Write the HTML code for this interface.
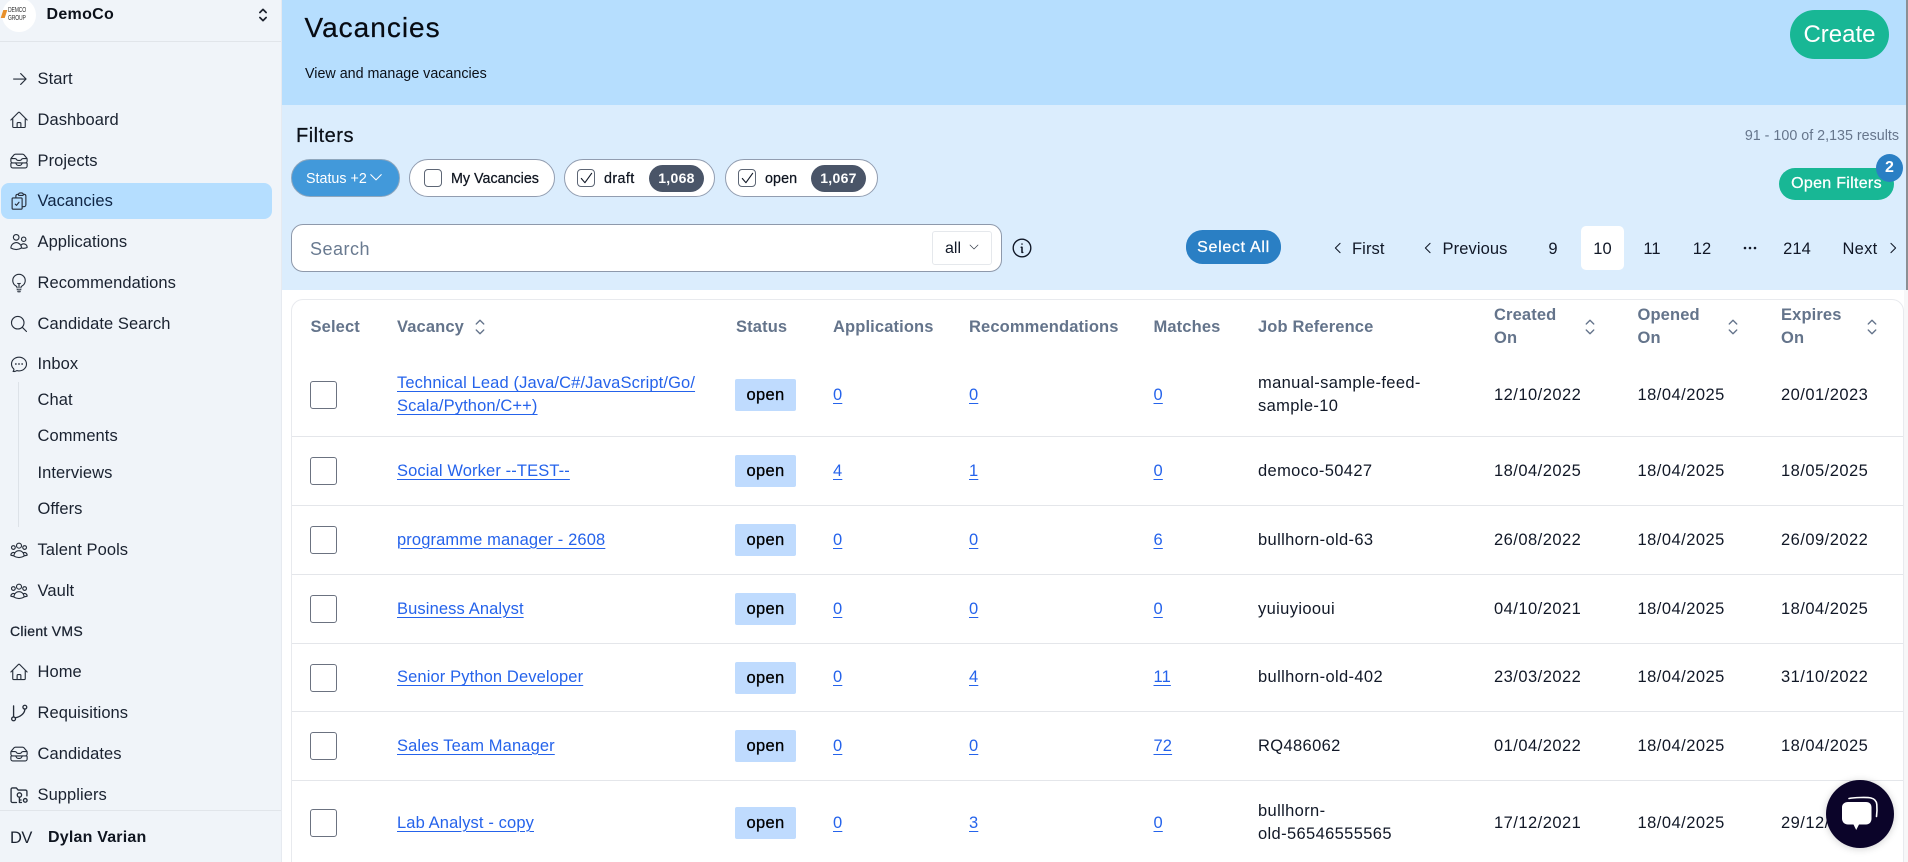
<!DOCTYPE html>
<html lang="en">
<head>
<meta charset="utf-8">
<title>Vacancies</title>
<style>
*{box-sizing:border-box}
html,body{margin:0;padding:0;width:1908px;height:862px;overflow:hidden;background:#fff}
body{font-family:"Liberation Sans",sans-serif;color:#111827;position:relative;font-size:16px}
a{color:inherit;text-decoration:none}
svg{display:block}
.ic{fill:none;stroke:currentColor;stroke-width:1.35;stroke-linecap:round;stroke-linejoin:round}
.abs{position:absolute;white-space:nowrap}
.med{-webkit-text-stroke:.25px currentColor}

aside{position:absolute;left:0;top:0;width:282px;height:862px;background:#f0f4f9;border-right:1px solid #e6eaf0}
.logo{position:absolute;left:2px;top:-2px;width:34px;height:34px;border-radius:50%;background:#fff}
.hr{position:absolute;left:0;width:281px;height:1px;background:#e1e5ea}
.active{position:absolute;left:1px;top:183px;width:271px;height:36px;border-radius:8px;background:#b5deff}
.n{position:absolute;left:0;width:272px;height:24px;line-height:24px;padding-left:37.5px;font-size:16.5px;letter-spacing:.06px;color:#1a2230;white-space:nowrap}
.n svg{position:absolute;left:9px;top:2px;width:20px;height:20px;color:#252d3a}
.n.v{color:#0f2544}
.vl{position:absolute;left:18px;top:382px;width:1px;height:145px;background:#dde2e8}

.head{position:absolute;left:282px;top:0;width:1624px;height:105px;background:#b6defe}
.filters{position:absolute;left:282px;top:105px;width:1624px;height:185px;background:#dbedfd}
.edge{position:absolute;left:1906px;top:0;width:2px;height:290px;background:#8b8f94}
.edge2{position:absolute;left:1904px;top:290px;width:4px;height:572px;background:#f7f7f8}

.pill{position:absolute;top:159px;height:38px;border:1px solid #929db0;border-radius:19px;background:#fff}
.cb{position:absolute;top:169px;width:18px;height:18px;border:1px solid #5d6675;border-radius:4px;background:#fff}
.cb svg{position:absolute;left:1px;top:0;width:15px;height:16px}
.badge{position:absolute;top:165px;height:27px;border-radius:14px;background:#4a5568;color:#fff;font-weight:700;font-size:14px;line-height:27px;text-align:center;letter-spacing:.3px}
.t14{font-size:14.3px;line-height:20px}

.search{position:absolute;left:291px;top:224px;width:711px;height:48px;border:1px solid #8e99ab;border-radius:12px;background:#fff}
.allbox{position:absolute;left:932px;top:231px;width:60px;height:34px;border:1px solid #e5e8ec;border-radius:3px;background:#fff}
.btn{position:absolute;color:#fff;text-align:center;white-space:nowrap}
.pg{position:absolute;top:239px;line-height:20px;color:#111827;white-space:nowrap;letter-spacing:.1px;font-size:16.5px}
.pgc{width:40px;text-align:center}
.cur{position:absolute;left:1581px;top:226px;width:43px;height:44px;background:#fff;border-radius:5px}

.card{position:absolute;left:291px;top:299px;width:1613px;height:580px;border:1px solid #e8eaee;border-radius:12px}
table{position:absolute;left:292px;top:299px;width:1611px;border-collapse:separate;border-spacing:0;table-layout:fixed;font-size:16.5px}
th{height:55px;text-align:left;font-weight:700;color:#64748b;letter-spacing:.13px;line-height:23px;padding:1px 0 0;vertical-align:middle;position:relative}
th.two{padding-top:0}
th svg{position:absolute;top:16px;width:24px;height:24px;color:#64748b;stroke-width:1.15}
td{padding:0;vertical-align:middle;line-height:23px;border-bottom:1px solid #e4e6ea;letter-spacing:.12px;color:#111827}
tr.last td{border-bottom:0}
td a{color:#2563eb;text-decoration:underline;text-underline-offset:3px;text-decoration-thickness:1px}
th:first-child{padding-left:18.5px}
td:first-child{padding-left:17.5px}
.box{display:block;width:27px;height:28px;border:1px solid #6b7280;border-radius:3px;background:#fff}
.tag{display:block;width:61px;height:32px;background:#bfdbfe;border-radius:2px;text-align:center;line-height:32px;letter-spacing:.3px;color:#000;-webkit-text-stroke:.3px #000}
.d{letter-spacing:.47px}
.j{letter-spacing:.36px}

.chat{position:absolute;left:1826px;top:780px;width:68px;height:68px;border-radius:50%;background:#0b0429;box-shadow:0 1px 8px rgba(0,0,0,.18)}
</style>
</head>
<body>

<aside>
  <div class="logo">
    <div class="abs" style="left:6px;top:9px;font-size:7px;line-height:8px;color:#333;letter-spacing:-.2px;transform:scaleX(.72);transform-origin:left">DEMCO<br>GROUP</div>
    <div class="abs" style="left:0;top:12px;width:4px;height:8px;background:#e8912d;transform:skewX(-18deg)"></div>
  </div>
  <div class="abs" style="left:46.5px;top:4px;font-weight:700;line-height:21px;letter-spacing:.3px;color:#0c111a">DemoCo</div>
  <svg class="ic abs" style="left:253px;top:5px;width:20px;height:20px;stroke-width:2;color:#1a202c" viewBox="0 0 24 24"><path d="M8.25 15 12 18.75 15.75 15m-7.5-6L12 5.25 15.75 9"/></svg>
  <div class="hr" style="top:41px"></div>

  <div class="active"></div>
  <a class="n" style="top:67px"><svg class="ic" viewBox="0 0 24 24"><path d="M14 5.500 20.500 12 14 18.500M20.500 12H5.500"/></svg>Start</a>
  <a class="n" style="top:108px"><svg class="ic" viewBox="0 0 24 24"><path d="m2.25 12 8.954-8.955c.44-.439 1.152-.439 1.591 0L21.75 12M4.5 9.75v10.125c0 .621.504 1.125 1.125 1.125H9.75v-4.875c0-.621.504-1.125 1.125-1.125h2.25c.621 0 1.125.504 1.125 1.125V21h4.125c.621 0 1.125-.504 1.125-1.125V9.75M8.25 21h8.25"/></svg>Dashboard</a>
  <a class="n" style="top:149px"><svg class="ic" viewBox="0 0 24 24"><path d="m7.875 14.25 1.214 1.942a2.25 2.25 0 0 0 1.908 1.058h2.006c.776 0 1.497-.4 1.908-1.058l1.214-1.942M2.41 9h4.636a2.25 2.25 0 0 1 1.872 1.002l.164.246a2.25 2.25 0 0 0 1.872 1.002h2.092a2.25 2.25 0 0 0 1.872-1.002l.164-.246A2.25 2.25 0 0 1 16.954 9h4.636M2.41 9a2.25 2.25 0 0 0-.16.832V12a2.25 2.25 0 0 0 2.25 2.25h15A2.25 2.25 0 0 0 21.75 12V9.832c0-.287-.055-.57-.16-.832M2.41 9a2.25 2.25 0 0 1 .382-.632l3.285-3.832a2.25 2.25 0 0 1 1.708-.786h8.43c.657 0 1.281.287 1.709.786l3.284 3.832c.163.19.291.404.382.632M4.5 20.25h15A2.25 2.25 0 0 0 21.75 18v-2.625c0-.621-.504-1.125-1.125-1.125H3.375c-.621 0-1.125.504-1.125 1.125V18a2.25 2.25 0 0 0 2.25 2.25Z"/></svg>Projects</a>
  <a class="n v" style="top:189px"><svg class="ic" viewBox="0 0 24 24"><path d="M11.35 3.836c-.065.21-.1.433-.1.664 0 .414.336.75.75.75h4.5a.75.75 0 0 0 .75-.75 2.25 2.25 0 0 0-.1-.664m-5.8 0A2.251 2.251 0 0 1 13.5 2.25H15c1.012 0 1.867.668 2.15 1.586m-5.8 0c-.376.023-.75.05-1.124.08C9.095 4.01 8.25 4.973 8.25 6.108V8.25m8.9-4.414c.376.023.75.05 1.124.08 1.131.094 1.976 1.057 1.976 2.192V16.5A2.25 2.25 0 0 1 18 18.75h-2.25m-7.5-10.5H4.875c-.621 0-1.125.504-1.125 1.125v11.25c0 .621.504 1.125 1.125 1.125h9.75c.621 0 1.125-.504 1.125-1.125V18.75m-7.5-10.5h6.375c.621 0 1.125.504 1.125 1.125v9.375m-8.25-3 1.5 1.5 3-3.75"/></svg>Vacancies</a>
  <a class="n" style="top:230px"><svg class="ic" viewBox="0 0 24 24"><path d="M15 19.128a9.38 9.38 0 0 0 2.625.372 9.337 9.337 0 0 0 4.121-.952 4.125 4.125 0 0 0-7.533-2.493M15 19.128v-.003c0-1.113-.285-2.16-.786-3.07M15 19.128v.106A12.318 12.318 0 0 1 8.624 21c-2.331 0-4.512-.645-6.374-1.766l-.001-.109a6.375 6.375 0 0 1 11.964-3.07M12 6.375a3.375 3.375 0 1 1-6.75 0 3.375 3.375 0 0 1 6.75 0Zm8.25 2.25a2.625 2.625 0 1 1-5.25 0 2.625 2.625 0 0 1 5.25 0Z"/></svg>Applications</a>
  <a class="n" style="top:271px"><svg class="ic" viewBox="0 0 24 24"><path d="M12 18v-5.25m0 0a6.01 6.01 0 0 0 1.5-.189m-1.5.189a6.01 6.01 0 0 1-1.5-.189m3.75 7.478a12.06 12.06 0 0 1-4.5 0m3.75 2.383a14.406 14.406 0 0 1-3 0M14.25 18v-.192c0-.983.658-1.823 1.508-2.316a7.5 7.5 0 1 0-7.517 0c.85.493 1.509 1.333 1.509 2.316V18"/></svg>Recommendations</a>
  <a class="n" style="top:312px"><svg class="ic" viewBox="0 0 24 24"><path d="m21 21-5.197-5.197m0 0A7.5 7.5 0 1 0 5.196 5.196a7.5 7.5 0 0 0 10.607 10.607Z"/></svg>Candidate Search</a>
  <a class="n" style="top:352px"><svg class="ic" viewBox="0 0 24 24"><path d="M8.625 12a.375.375 0 1 1-.75 0 .375.375 0 0 1 .75 0Zm0 0H8.25m4.125 0a.375.375 0 1 1-.75 0 .375.375 0 0 1 .75 0Zm0 0H12m4.125 0a.375.375 0 1 1-.75 0 .375.375 0 0 1 .75 0Zm0 0h-.375M21 12c0 4.556-4.03 8.25-9 8.25a9.764 9.764 0 0 1-2.555-.337A5.972 5.972 0 0 1 5.41 20.97a5.969 5.969 0 0 1-.474-.065 4.48 4.48 0 0 0 .978-2.025c.09-.457-.133-.901-.467-1.226C3.93 16.178 3 14.189 3 12c0-4.556 4.03-8.25 9-8.25s9 3.694 9 8.25Z"/></svg>Inbox</a>
  <div class="vl"></div>
  <a class="n" style="top:388px">Chat</a>
  <a class="n" style="top:424px">Comments</a>
  <a class="n" style="top:461px">Interviews</a>
  <a class="n" style="top:497px">Offers</a>
  <a class="n" style="top:538px"><svg class="ic" viewBox="0 0 24 24"><path d="M18 18.72a9.094 9.094 0 0 0 3.741-.479 3 3 0 0 0-4.682-2.72m.94 3.198.001.031c0 .225-.012.447-.037.666A11.944 11.944 0 0 1 12 21c-2.17 0-4.207-.576-5.963-1.584A6.062 6.062 0 0 1 6 18.719m12 0a5.971 5.971 0 0 0-.941-3.197m0 0A5.995 5.995 0 0 0 12 12.75a5.995 5.995 0 0 0-5.058 2.772m0 0a3 3 0 0 0-4.681 2.72 8.986 8.986 0 0 0 3.74.477m.94-3.197a5.971 5.971 0 0 0-.94 3.197M15 6.75a3 3 0 1 1-6 0 3 3 0 0 1 6 0Zm6 2.25a2.25 2.25 0 1 1-4.5 0 2.25 2.25 0 0 1 4.5 0Zm-13.5 0a2.25 2.25 0 1 1-4.5 0 2.25 2.25 0 0 1 4.5 0Z"/></svg>Talent Pools</a>
  <a class="n" style="top:579px"><svg class="ic" viewBox="0 0 24 24"><path d="M18 18.72a9.094 9.094 0 0 0 3.741-.479 3 3 0 0 0-4.682-2.72m.94 3.198.001.031c0 .225-.012.447-.037.666A11.944 11.944 0 0 1 12 21c-2.17 0-4.207-.576-5.963-1.584A6.062 6.062 0 0 1 6 18.719m12 0a5.971 5.971 0 0 0-.941-3.197m0 0A5.995 5.995 0 0 0 12 12.75a5.995 5.995 0 0 0-5.058 2.772m0 0a3 3 0 0 0-4.681 2.72 8.986 8.986 0 0 0 3.74.477m.94-3.197a5.971 5.971 0 0 0-.94 3.197M15 6.75a3 3 0 1 1-6 0 3 3 0 0 1 6 0Zm6 2.25a2.25 2.25 0 1 1-4.5 0 2.25 2.25 0 0 1 4.5 0Zm-13.5 0a2.25 2.25 0 1 1-4.5 0 2.25 2.25 0 0 1 4.5 0Z"/></svg>Vault</a>
  <div class="abs med" style="left:10px;top:621px;font-size:14px;line-height:20px;letter-spacing:.3px;color:#1a2230">Client VMS</div>
  <a class="n" style="top:660px"><svg class="ic" viewBox="0 0 24 24"><path d="m2.25 12 8.954-8.955c.44-.439 1.152-.439 1.591 0L21.75 12M4.5 9.75v10.125c0 .621.504 1.125 1.125 1.125H9.75v-4.875c0-.621.504-1.125 1.125-1.125h2.25c.621 0 1.125.504 1.125 1.125V21h4.125c.621 0 1.125-.504 1.125-1.125V9.75M8.25 21h8.25"/></svg>Home</a>
  <a class="n" style="top:701px"><svg class="ic" viewBox="0 0 24 24" style="stroke-width:1.6"><circle cx="5.500" cy="19" r="2.300"/><circle cx="19" cy="5" r="2.300"/><path d="M5.500 16.700V3.500M19 7.300c0 5.200-5.500 9.400-11.600 10.400"/></svg>Requisitions</a>
  <a class="n" style="top:742px"><svg class="ic" viewBox="0 0 24 24"><path d="m7.875 14.25 1.214 1.942a2.25 2.25 0 0 0 1.908 1.058h2.006c.776 0 1.497-.4 1.908-1.058l1.214-1.942M2.41 9h4.636a2.25 2.25 0 0 1 1.872 1.002l.164.246a2.25 2.25 0 0 0 1.872 1.002h2.092a2.25 2.25 0 0 0 1.872-1.002l.164-.246A2.25 2.25 0 0 1 16.954 9h4.636M2.41 9a2.25 2.25 0 0 0-.16.832V12a2.25 2.25 0 0 0 2.25 2.25h15A2.25 2.25 0 0 0 21.75 12V9.832c0-.287-.055-.57-.16-.832M2.41 9a2.25 2.25 0 0 1 .382-.632l3.285-3.832a2.25 2.25 0 0 1 1.708-.786h8.43c.657 0 1.281.287 1.709.786l3.284 3.832c.163.19.291.404.382.632M4.5 20.25h15A2.25 2.25 0 0 0 21.75 18v-2.625c0-.621-.504-1.125-1.125-1.125H3.375c-.621 0-1.125.504-1.125 1.125V18a2.25 2.25 0 0 0 2.25 2.25Z"/></svg>Candidates</a>
  <a class="n" style="top:783px"><svg class="ic" viewBox="0 0 24 24" style="stroke-width:1.6"><path d="M9 21H4.200A1.700 1.700 0 0 1 2.500 19.300V5.200A1.700 1.700 0 0 1 4.200 3.500h4.600l2.200 2.600h8.800a1.700 1.700 0 0 1 1.700 1.700V13"/><circle cx="12.500" cy="12" r="2.600"/><path d="M12.500 14.600V21h2.400M12.500 18h2"/><circle cx="19.500" cy="18.500" r="2.200"/></svg>Suppliers</a>
  <div class="hr" style="top:810px"></div>
  <div class="abs" style="left:10px;top:828px;font-size:16.5px;line-height:20px;letter-spacing:-.6px;color:#1a2230">DV</div>
  <div class="abs" style="left:48px;top:828px;font-weight:700;line-height:20px;letter-spacing:.2px;color:#0f1520">Dylan Varian</div>
</aside>

<div class="head"></div>
<div class="filters"></div>
<div class="edge"></div>
<div class="edge2"></div>

<div class="abs med" style="left:304.5px;top:11.5px;font-size:28px;line-height:32px;letter-spacing:1px;color:#070b12">Vacancies</div>
<div class="abs t14" style="left:305px;top:64px;color:#0b1018">View and manage vacancies</div>
<a class="btn" style="left:1790px;top:10px;width:99px;height:49px;border-radius:25px;background:#18b795;font-size:24px;line-height:49px">Create</a>

<div class="abs med" style="left:296px;top:123.500px;font-size:20px;line-height:24px;letter-spacing:.5px;color:#0b1018">Filters</div>
<div class="abs t14" style="right:9px;top:126px;color:#66768c">91 - 100 of 2,135 results</div>

<div class="pill" style="left:291px;width:109px;background:#4299da;border-color:#8fa7bd"></div>
<div class="abs t14" style="left:306px;top:169px;color:#fff">Status +2</div>
<svg class="ic abs" style="left:369px;top:170px;width:14px;height:14px;color:#fff;stroke-width:1.800" viewBox="0 0 24 24"><path d="m3 8 9 9 9-9"/></svg>

<div class="pill" style="left:409px;width:146px"></div>
<div class="cb" style="left:424px"></div>
<div class="abs t14 med" style="left:451px;top:169px;color:#0f1520">My Vacancies</div>

<div class="pill" style="left:564px;width:151px"></div>
<div class="cb" style="left:577px"><svg class="ic" viewBox="0 0 16 16" style="color:#111827;stroke-width:1.2"><path d="M2.500 8.500 6.300 13 13.500 3"/></svg></div>
<div class="abs t14 med" style="left:604px;top:169px;letter-spacing:.4px;color:#0f1520">draft</div>
<div class="badge" style="left:649px;width:55px">1,068</div>

<div class="pill" style="left:725px;width:153px"></div>
<div class="cb" style="left:738px"><svg class="ic" viewBox="0 0 16 16" style="color:#111827;stroke-width:1.2"><path d="M2.500 8.500 6.300 13 13.500 3"/></svg></div>
<div class="abs t14 med" style="left:765px;top:169px;letter-spacing:.1px;color:#0f1520">open</div>
<div class="badge" style="left:811px;width:55px">1,067</div>

<a class="btn med" style="left:1779px;top:168px;width:115px;height:32px;border-radius:16px;background:#18b795;line-height:32px;letter-spacing:.3px">Open Filters</a>
<div class="btn" style="left:1876px;top:154px;width:27px;height:28px;border-radius:50%;background:#2a7fc4;font-weight:700;font-size:16px;line-height:28px">2</div>

<div class="search">
  <div class="abs" style="left:18px;top:12px;font-size:18px;line-height:24px;letter-spacing:.5px;color:#697a90">Search</div>
</div>
<div class="allbox">
  <div class="abs" style="left:12px;top:7px;line-height:20px;color:#111827">all</div>
  <svg class="ic abs" style="left:35px;top:9px;width:12px;height:12px;color:#333b47" viewBox="0 0 24 24"><path d="m4 8 8 8 8-8"/></svg>
</div>
<svg class="ic abs" style="left:1011px;top:237px;width:22px;height:22px;color:#111827;stroke-width:1.500" viewBox="0 0 24 24"><circle cx="12" cy="12" r="9.600"/><path d="M11.200 11.200h.8v5.600h.8M12 7.600v.1" stroke-width="1.700"/></svg>

<a class="btn med" style="left:1186px;top:231px;width:95px;height:33px;border-radius:17px;background:#2a7fc4;line-height:33px;font-size:16px;letter-spacing:.7px;box-shadow:0 -1px 0 #2a7fc4">Select All</a>

<svg class="ic abs" style="left:1331px;top:241px;width:14px;height:14px;color:#111827;stroke-width:1.800" viewBox="0 0 24 24"><path d="M15.500 4 7.500 12l8 8"/></svg>
<a class="pg" style="left:1352px">First</a>
<svg class="ic abs" style="left:1421px;top:241px;width:14px;height:14px;color:#111827;stroke-width:1.800" viewBox="0 0 24 24"><path d="M15.500 4 7.500 12l8 8"/></svg>
<a class="pg" style="left:1442.5px">Previous</a>
<a class="pg pgc" style="left:1533px">9</a>
<div class="cur"></div>
<a class="pg pgc" style="left:1582.5px">10</a>
<a class="pg pgc" style="left:1632px">11</a>
<a class="pg pgc" style="left:1682px">12</a>
<svg class="abs" style="left:1742px;top:245px;width:16px;height:6px" viewBox="0 0 16 6"><circle cx="3" cy="3" r="1.300" fill="#111827"/><circle cx="8" cy="3" r="1.300" fill="#111827"/><circle cx="13" cy="3" r="1.300" fill="#111827"/></svg>
<a class="pg pgc" style="left:1777px">214</a>
<a class="pg" style="left:1842.5px;letter-spacing:.25px">Next</a>
<svg class="ic abs" style="left:1886px;top:241px;width:14px;height:14px;color:#111827;stroke-width:1.800" viewBox="0 0 24 24"><path d="m8.500 4 8 8-8 8"/></svg>

<div class="card"></div>
<table>
  <colgroup><col style="width:105px"><col style="width:338px"><col style="width:98px"><col style="width:136px"><col style="width:184.5px"><col style="width:104.5px"><col style="width:236px"><col style="width:143.5px"><col style="width:143.5px"><col style="width:122px"></colgroup>
  <tr>
    <th>Select</th>
    <th>Vacancy<svg class="ic" style="left:71px" viewBox="0 0 24 24"><path d="M8.250 15 12 18.750 15.750 15m-7.500-6L12 5.250 15.750 9"/></svg></th>
    <th style="padding-left:1px">Status</th>
    <th>Applications</th>
    <th>Recommendations</th>
    <th>Matches</th>
    <th>Job Reference</th>
    <th class="two">Created<br>On<svg class="ic" style="left:84px" viewBox="0 0 24 24"><path d="M8.250 15 12 18.750 15.750 15m-7.500-6L12 5.250 15.750 9"/></svg></th>
    <th class="two">Opened<br>On<svg class="ic" style="left:83px" viewBox="0 0 24 24"><path d="M8.250 15 12 18.750 15.750 15m-7.500-6L12 5.250 15.750 9"/></svg></th>
    <th class="two">Expires<br>On<svg class="ic" style="left:79px" viewBox="0 0 24 24"><path d="M8.250 15 12 18.750 15.750 15m-7.500-6L12 5.250 15.750 9"/></svg></th>
  </tr>
  <tr style="height:83px"><td><span class="box"></span></td><td><a>Technical Lead (Java/C#/JavaScript/Go/<br>Scala/Python/C++)</a></td><td><span class="tag">open</span></td><td><a>0</a></td><td><a>0</a></td><td><a>0</a></td><td class="j">manual-sample-feed-<br>sample-10</td><td class="d">12/10/2022</td><td class="d">18/04/2025</td><td class="d">20/01/2023</td></tr>
  <tr style="height:69px"><td><span class="box"></span></td><td><a>Social Worker --TEST--</a></td><td><span class="tag">open</span></td><td><a>4</a></td><td><a>1</a></td><td><a>0</a></td><td class="j">democo-50427</td><td class="d">18/04/2025</td><td class="d">18/04/2025</td><td class="d">18/05/2025</td></tr>
  <tr style="height:69px"><td><span class="box"></span></td><td><a>programme manager - 2608</a></td><td><span class="tag">open</span></td><td><a>0</a></td><td><a>0</a></td><td><a>6</a></td><td class="j">bullhorn-old-63</td><td class="d">26/08/2022</td><td class="d">18/04/2025</td><td class="d">26/09/2022</td></tr>
  <tr style="height:69px"><td><span class="box"></span></td><td><a>Business Analyst</a></td><td><span class="tag">open</span></td><td><a>0</a></td><td><a>0</a></td><td><a>0</a></td><td class="j">yuiuyiooui</td><td class="d">04/10/2021</td><td class="d">18/04/2025</td><td class="d">18/04/2025</td></tr>
  <tr style="height:68px"><td><span class="box"></span></td><td><a>Senior Python Developer</a></td><td><span class="tag">open</span></td><td><a>0</a></td><td><a>4</a></td><td><a>11</a></td><td class="j">bullhorn-old-402</td><td class="d">23/03/2022</td><td class="d">18/04/2025</td><td class="d">31/10/2022</td></tr>
  <tr style="height:69px"><td><span class="box"></span></td><td><a>Sales Team Manager</a></td><td><span class="tag">open</span></td><td><a>0</a></td><td><a>0</a></td><td><a>72</a></td><td class="j">RQ486062</td><td class="d">01/04/2022</td><td class="d">18/04/2025</td><td class="d">18/04/2025</td></tr>
  <tr class="last" style="height:84px"><td><span class="box"></span></td><td><a>Lab Analyst - copy</a></td><td><span class="tag">open</span></td><td><a>0</a></td><td><a>3</a></td><td><a>0</a></td><td class="j">bullhorn-<br>old-56546555565</td><td class="d">17/12/2021</td><td class="d">18/04/2025</td><td class="d">29/12/2021</td></tr>
</table>

<div class="chat">
  <svg style="position:absolute;left:0;top:0;width:68px;height:68px" viewBox="0 0 68 68">
    <path d="M23 18.500c5-1 18-1.500 22-.5 3.500.8 5.500 3 5.800 6.500.3 3.500.3 8-.3 12" fill="none" stroke="#fff" stroke-width="1.600" stroke-linecap="round"/>
    <path d="M22 22h18c3.500 0 5.500 2 5.500 5.500v11c0 3.500-2 6-5.500 6h-7l-2.800 5.500-2.700-5.500H22c-3.500 0-6-2.500-6-6v-11c0-3.500 2.500-5.500 6-5.500Z" fill="#fff"/>
  </svg>
</div>

</body>
</html>
